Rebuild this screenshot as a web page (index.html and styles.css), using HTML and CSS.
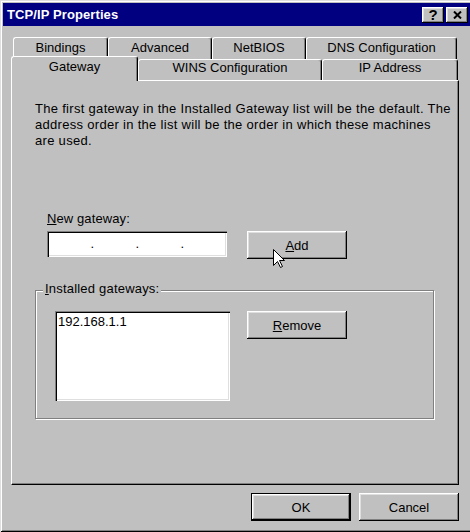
FILE: index.html
```html
<!DOCTYPE html>
<html lang="en">
<head>
  <meta charset="UTF-8">
  <title>TCP/IP Properties</title>
  <link rel="stylesheet" href="styles.css">
</head>
<body>
  <div class="window">
    <div class="titlebar">
      <span class="title">TCP/IP Properties</span>
      <div class="title-buttons">
        <span class="tbtn">?</span>
        <span class="tbtn">
          <svg width="9" height="8" viewBox="0 0 9 8">
            <path d="M1 0.5 L8 7.5 M8 0.5 L1 7.5" stroke="#000" stroke-width="2" fill="none"/>
          </svg>
        </span>
      </div>
    </div>

    <div class="tab-row back">
      <div class="tab tab-bindings">Bindings</div>
      <div class="tab tab-advanced">Advanced</div>
      <div class="tab tab-netbios">NetBIOS</div>
      <div class="tab tab-dns">DNS Configuration</div>
    </div>
    <div class="tab-row front">
      <div class="tab tab-gateway selected">Gateway</div>
      <div class="tab tab-wins">WINS Configuration</div>
      <div class="tab tab-ip">IP Address</div>
    </div>

    <div class="panel">
      <p class="intro">The first gateway in the Installed Gateway list will be the default. The address order in the list will be the order in which these machines are used.</p>

      <div class="new-row">
        <div class="new-field">
          <div class="label"><u>N</u>ew gateway:</div>
          <div class="ip-box">
            <span class="dot">.</span>
            <span class="dot">.</span>
            <span class="dot">.</span>
          </div>
        </div>
        <button class="btn add-btn"><u>A</u>dd</button>
      </div>

      <div class="group">
        <span class="group-label"><u>I</u>nstalled gateways:</span>
        <div class="listbox">
          <div class="list-item">192.168.1.1</div>
        </div>
        <button class="btn"><u>R</u>emove</button>
      </div>
    </div>

    <div class="dialog-buttons">
      <button class="btn default">OK</button>
      <button class="btn">Cancel</button>
    </div>
  </div>

  <!-- mouse pointer over the Add button -->
  <svg class="cursor" width="13" height="20" viewBox="0 0 13 20">
    <path d="M0.5 0.5 L0.5 16.5 L4.5 12.5 L7.5 18.5 L9.5 17.5 L6.5 11.5 L11.5 11.5 Z" fill="#fff" stroke="#000" stroke-width="1"/>
  </svg>
</body>
</html>
```

FILE: styles.css
```css
body {
  margin: 0;
  width: 470px;
  height: 532px;
  overflow: hidden;
  position: relative;
  background-color: #c0c0c0;
  font-family: "Liberation Sans", Arial, sans-serif;
  font-size: 13px;
  color: #000;
}
.window {
  box-sizing: border-box;
  width: 474px;
  height: 532px;
  padding: 3px;
  background-color: #c0c0c0;
  box-shadow: inset 1px 1px #dfdfdf, inset -1px -1px #000, inset 2px 2px #fff, inset -2px -2px #808080;
}
.titlebar {
  display: flex;
  align-items: center;
  justify-content: space-between;
  height: 23px;
  padding: 0 3px 0 4px;
  background-color: #000080;
}
.title {
  color: #fff;
  font-weight: bold;
  font-size: 13px;
  letter-spacing: 0.1px;
}
.title-buttons {
  display: flex;
  gap: 2px;
}
.tbtn {
  box-sizing: border-box;
  display: flex;
  align-items: center;
  justify-content: center;
  width: 22px;
  height: 16px;
  background-color: #c0c0c0;
  box-shadow: inset -1px -1px #000, inset 1px 1px #fff, inset -2px -2px #808080, inset 2px 2px #dfdfdf;
  font-weight: bold;
  font-size: 15px;
  line-height: 16px;
}
.tab-row {
  display: flex;
  margin-left: 8px;
}
.tab-row.back {
  margin-top: 11px;
  padding-left: 2px;
  height: 22px;
}
.tab-row.front {
  height: 21px;
  align-items: flex-end;
}
.tab {
  box-sizing: border-box;
  height: 22px;
  padding-top: 2px;
  border-top: 1px solid #fff;
  border-left: 1px solid #fff;
  border-right: 1px solid #000;
  border-radius: 3px 3px 0 0;
  box-shadow: inset -1px 0 #808080;
  background-color: #c0c0c0;
  text-align: center;
  line-height: 16px;
  white-space: nowrap;
}
.front .tab {
  height: 21px;
  padding-top: 0;
}
.front .tab.selected {
  position: relative;
  z-index: 1;
  height: 25px;
  margin-bottom: -1px;
  padding-top: 2px;
}
.tab-bindings { width: 95px; }
.tab-advanced { width: 104px; }
.tab-netbios { width: 94px; }
.tab-dns { width: 151px; }
.tab-gateway { width: 127px; }
.tab-wins { width: 184px; }
.tab-ip { width: 136px; }
.panel {
  box-sizing: border-box;
  width: 448px;
  height: 405px;
  margin-left: 8px;
  border-top: 1px solid #fff;
  border-left: 1px solid #fff;
  border-right: 1px solid #000;
  border-bottom: 1px solid #000;
  box-shadow: inset -1px -1px #808080;
  overflow: hidden;
}
.intro {
  width: 418px;
  margin: 20px 0 0 23px;
  line-height: 16px;
  letter-spacing: 0.3px;
}
.new-row {
  display: flex;
  align-items: flex-start;
  margin: 62px 0 0 35px;
}
.label {
  line-height: 16px;
  letter-spacing: 0.1px;
}
.ip-box {
  box-sizing: border-box;
  display: flex;
  width: 180px;
  height: 26px;
  margin-top: 4px;
  padding: 2px;
  background-color: #fff;
  box-shadow: inset 1px 1px #808080, inset 2px 2px #000, inset -1px -1px #fff, inset -2px -2px #dfdfdf;
  line-height: 22px;
}
.dot {
  width: 45px;
  text-align: right;
}
.btn {
  box-sizing: border-box;
  width: 100px;
  height: 28px;
  padding: 0;
  border: none;
  background-color: #c0c0c0;
  box-shadow: inset -1px -1px #000, inset 1px 1px #fff, inset -2px -2px #808080, inset 2px 2px #dfdfdf;
  font-family: "Liberation Sans", Arial, sans-serif;
  font-size: 13px;
  color: #000;
}
.btn.default {
  border: 1px solid #000;
}
.add-btn {
  margin: 20px 0 0 20px;
}
.group {
  position: relative;
  box-sizing: border-box;
  display: flex;
  align-items: flex-start;
  width: 399px;
  height: 129px;
  margin: 31px 0 0 23px;
  padding: 20px 0 0 19px;
  border: 1px solid #808080;
  box-shadow: 1px 1px #fff, inset 1px 1px #fff;
}
.group-label {
  position: absolute;
  left: 7px;
  top: -10px;
  padding: 0 2px;
  line-height: 16px;
  letter-spacing: 0.2px;
  background-color: #c0c0c0;
}
.listbox {
  box-sizing: border-box;
  width: 175px;
  height: 90px;
  margin-right: 17px;
  padding: 3px 3px;
  background-color: #fff;
  box-shadow: inset 1px 1px #808080, inset 2px 2px #000, inset -1px -1px #fff, inset -2px -2px #dfdfdf;
}
.list-item {
  line-height: 16px;
}
.dialog-buttons {
  display: flex;
  justify-content: flex-end;
  gap: 8px;
  width: 448px;
  margin: 8px 0 0 8px;
}
.cursor {
  position: absolute;
  left: 273px;
  top: 249px;
}
```
